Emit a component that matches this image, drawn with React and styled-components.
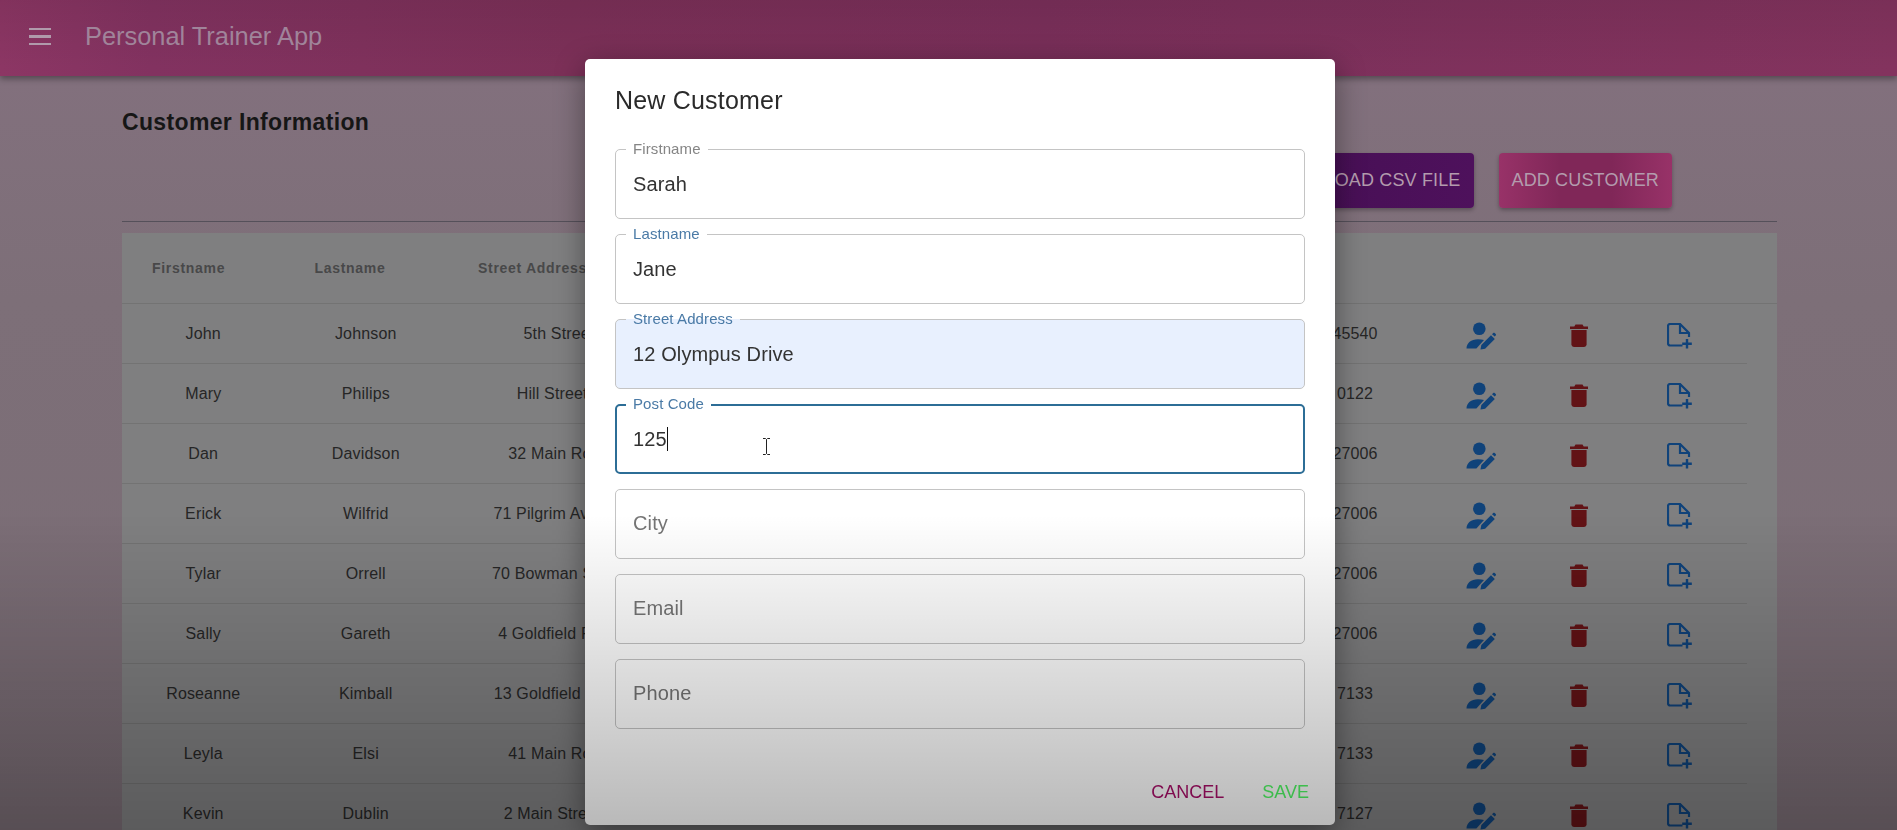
import React from "react";
import styled, { createGlobalStyle } from "styled-components";

const rows = [
  ["John", "Johnson", "5th Street", "45540"],
  ["Mary", "Philips", "Hill Street 2", "0122"],
  ["Dan", "Davidson", "32 Main Road", "27006"],
  ["Erick", "Wilfrid", "71 Pilgrim Avenue", "27006"],
  ["Tylar", "Orrell", "70 Bowman Street", "27006"],
  ["Sally", "Gareth", "4 Goldfield Road", "27006"],
  ["Roseanne", "Kimball", "13 Goldfield Road", "7133"],
  ["Leyla", "Elsi", "41 Main Road", "7133"],
  ["Kevin", "Dublin", "2 Main Street 4", "7127"],
];

const PersonEditIcon = () => (
  <svg width="30" height="28" viewBox="0 0 30 28" fill="#10437a">
    <circle cx="13.3" cy="6.7" r="6.3" />
    <path d="M0.5 26.5C0.5 21 5 17.2 12 17.2c2.2 0 4.2 0.3 6 0.9L10.4 26.5Z" />
    <path d="M14.5 27.5l0.8-4.6L25 13.2l3.8 3.8-9.7 9.7Z" />
    <path d="M26 12.2l1.2-1.2c0.5-0.5 1-0.5 1.5 0l1 1c0.5 0.5 0.5 1 0 1.5l-1 1Z" />
  </svg>
);

const TrashIcon = () => (
  <svg width="18" height="23" viewBox="0 0 18 23" fill="#621316">
    <path d="M5.5 0.6h7l1.2 2H18v2.4H0V2.6h4.3Z" />
    <path d="M1.4 6h15.2v14.2c0 1.6-1.2 2.8-2.8 2.8H4.2c-1.6 0-2.8-1.2-2.8-2.8Z" />
  </svg>
);

const FileAddIcon = () => (
  <svg width="26" height="26" viewBox="0 0 26 26" fill="none" stroke="#10437a" strokeWidth="2.2">
    <path d="M15.5 22.5H3.2C2 22.5 1 21.5 1 20.3V3.2C1 2 2 1 3.2 1H13l9 9v4" />
    <path d="M13 1v9h9" />
    <path d="M20 16v9.5M15.2 20.8h9.6" strokeWidth="2.4" />
  </svg>
);

const MouseCursor = () => (
  <CursorMark width="9" height="17" viewBox="0 0 9 17" fill="none" stroke="#222" strokeWidth="1">
    <path d="M1 0.5h2.5l1 1 1-1H8M4.5 1.5v14M1 16.5h2.5l1-1 1 1H8" />
  </CursorMark>
);

const Field = ({ label, value, placeholder, focused, filled, blue }) => (
  <FieldBox $focused={focused} $filled={filled}>
    {label && (
      <FieldLabel $blue={blue} $focused={focused} $filled={filled}>
        {label}
      </FieldLabel>
    )}
    {value && (
      <FieldValue>
        {value}
        {focused && <Caret />}
      </FieldValue>
    )}
    {placeholder && <Placeholder>{placeholder}</Placeholder>}
  </FieldBox>
);

const App = () => {
  return (
    <>
      <GlobalStyle />
      <Page>
        <AppBar>
          <MenuButton>
            <i />
            <i />
            <i />
          </MenuButton>
          <AppTitle>Personal Trainer App</AppTitle>
        </AppBar>
        <Content>
          <Heading>Customer Information</Heading>
          <Toolbar>
            <ToolButton $bg="linear-gradient(90deg, #460f54, #4e115c)">UPLOAD CSV FILE</ToolButton>
            <ToolButton $bg="linear-gradient(90deg, #983268, #802758 35%, #802758 65%, #983268)">ADD CUSTOMER</ToolButton>
          </Toolbar>
          <Divider />
          <Table>
            <HeadRow>
              <HeadCell>Firstname</HeadCell>
              <HeadCell>Lastname</HeadCell>
              <HeadCell>Street Address</HeadCell>
            </HeadRow>
            {rows.map((r) => (
              <Row key={r[0]}>
                <Cell>{r[0]}</Cell>
                <Cell>{r[1]}</Cell>
                <Cell>{r[2]}</Cell>
                <span />
                <PhoneCell>{r[3]}</PhoneCell>
                <IconCell>
                  <PersonEditIcon />
                </IconCell>
                <IconCell>
                  <TrashIcon />
                </IconCell>
                <IconCell>
                  <FileAddIcon />
                </IconCell>
              </Row>
            ))}
          </Table>
        </Content>
      </Page>
      <Dialog>
        <DialogTitle>New Customer</DialogTitle>
        <Fields>
          <Field label="Firstname" value="Sarah" />
          <Field label="Lastname" value="Jane" blue />
          <Field label="Street Address" value="12 Olympus Drive" filled blue />
          <Field label="Post Code" value="125" focused blue />
          <Field placeholder="City" />
          <Field placeholder="Email" />
          <Field placeholder="Phone" />
        </Fields>
        <Actions>
          <ActionButton $color="#a80f68">CANCEL</ActionButton>
          <ActionButton $color="#50f864">SAVE</ActionButton>
        </Actions>
        <MouseCursor />
      </Dialog>
      <Fade />
    </>
  );
};

export default App;

const GlobalStyle = createGlobalStyle`
  html, body {
    margin: 0;
    height: 100%;
    overflow: hidden;
    font-family: "Liberation Sans", Arial, sans-serif;
    background: #7a6d75;
  }
  * {
    box-sizing: border-box;
  }
`;

const Page = styled.div`
  height: 830px;
  overflow: hidden;
  background: linear-gradient(180deg, #82707d 76px, #7d6f78 300px, #7a6d75 100%);
`;

const AppBar = styled.header`
  height: 76px;
  display: flex;
  align-items: center;
  padding: 0 0 3px 29px;
  background: linear-gradient(180deg, rgba(0, 0, 0, 0.07), rgba(0, 0, 0, 0) 90%),
    linear-gradient(90deg, #8c3664 0, #823260 8%, #7c3058 30%, #7a2f5a 55%, #83335e 100%);
  box-shadow: 0 3px 6px rgba(0, 0, 0, 0.35);
`;

const MenuButton = styled.div`
  width: 22px;
  margin-right: 34px;
  display: flex;
  flex-direction: column;
  gap: 5px;
  i {
    display: block;
    height: 2.4px;
    background: #b09aab;
  }
`;

const AppTitle = styled.div`
  font-size: 25.4px;
  color: #a0849a;
`;

const Content = styled.main`
  padding: 33px 120px 0 122px;
`;

const Heading = styled.h2`
  margin: 0;
  font-size: 23px;
  line-height: 26px;
  font-weight: 700;
  letter-spacing: 0.35px;
  color: #161616;
`;

const Toolbar = styled.div`
  display: flex;
  justify-content: flex-end;
  gap: 25px;
  margin-top: 18px;
  padding-right: 105px;
`;

const ToolButton = styled.button`
  height: 55px;
  padding: 0 13px;
  border: 0;
  border-radius: 4px;
  font: 18px "Liberation Sans", Arial, sans-serif;
  letter-spacing: 0.15px;
  color: #b39cad;
  background: ${(p) => p.$bg};
  box-shadow: 0 2px 4px rgba(0, 0, 0, 0.3);
`;

const Divider = styled.div`
  height: 1px;
  margin-top: 13px;
  background: #55505a;
`;

const Table = styled.section`
  margin-top: 11px;
  background: #7f7f80;
`;

const HeadRow = styled.div`
  height: 71px;
  display: grid;
  grid-template-columns: 162.5px 162.5px 224px;
  align-items: center;
  border-bottom: 1px solid #737373;
`;

const HeadCell = styled.div`
  padding-left: 30px;
  font-size: 14px;
  font-weight: 700;
  letter-spacing: 0.7px;
  color: #484849;
  &:last-child {
    padding-left: 31px;
    white-space: nowrap;
  }
`;

const Row = styled.div`
  height: 60px;
  width: 1625px;
  display: grid;
  grid-template-columns: 162.5px 162.5px 224px 634px 125px 101px 96px 106px;
  align-items: center;
  border-bottom: 1px solid #737373;
`;

const Cell = styled.div`
  display: flex;
  justify-content: center;
  padding-top: 1px;
  font-size: 16px;
  letter-spacing: 0.15px;
  color: #262626;
  white-space: nowrap;
`;

const PhoneCell = styled(Cell)`
  padding-right: 25px;
`;

const IconCell = styled(Cell)`
  padding-top: 4px;
`;

const Dialog = styled.div`
  position: fixed;
  left: 585px;
  top: 59px;
  width: 750px;
  height: 766px;
  padding: 0 30px;
  border-radius: 5px;
  background: #fff;
  box-shadow: 0 8px 30px rgba(0, 0, 0, 0.4);
`;

const DialogTitle = styled.h2`
  margin: 0;
  height: 90px;
  padding-top: 25px;
  font-size: 25px;
  line-height: 32px;
  font-weight: 400;
  letter-spacing: 0.2px;
  color: #2a2a2a;
`;

const Fields = styled.div`
  display: flex;
  flex-direction: column;
  gap: 15px;
`;

const FieldBox = styled.div`
  position: relative;
  height: 70px;
  padding-left: ${(p) => (p.$focused ? "16px" : "17px")};
  display: flex;
  align-items: center;
  border-radius: 5px;
  border: ${(p) => (p.$focused ? "2px solid #2c6d96" : "1px solid #c4c4c4")};
  background: ${(p) => (p.$filled ? "#e8f0fe" : "transparent")};
`;

const FieldLabel = styled.label`
  position: absolute;
  left: ${(p) => (p.$focused ? "9px" : "10px")};
  top: ${(p) => (p.$focused ? "-11px" : "-10px")};
  padding: 0 7px;
  font-size: 15px;
  line-height: 17px;
  letter-spacing: 0.1px;
  color: ${(p) => (p.$blue ? "#4a7aa6" : "#858585")};
  background: ${(p) => (p.$filled ? "linear-gradient(180deg, #fff 55%, #e8f0fe 55%)" : "#fff")};
`;

const FieldValue = styled.div`
  display: flex;
  align-items: center;
  font-size: 20px;
  letter-spacing: 0.12px;
  color: #333;
`;

const Placeholder = styled.div`
  margin-bottom: 2px;
  font-size: 20px;
  letter-spacing: 0.12px;
  color: #757575;
`;

const Caret = styled.span`
  width: 1px;
  height: 24px;
  background: #111;
`;

const Actions = styled.div`
  display: flex;
  justify-content: flex-end;
  gap: 38px;
  margin-top: 52px;
  margin-right: -4px;
`;

const ActionButton = styled.span`
  font-size: 18px;
  line-height: 22px;
  color: ${(p) => p.$color};
`;

const CursorMark = styled.svg`
  position: absolute;
  left: 177px;
  top: 379px;
`;

const Fade = styled.div`
  position: fixed;
  inset: 0;
  pointer-events: none;
  background: linear-gradient(180deg, transparent 62%, rgba(0, 0, 0, 0.28) 100%);
`;
